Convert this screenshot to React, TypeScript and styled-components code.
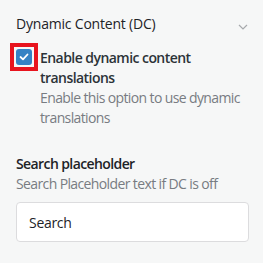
import React from "react";
import styled, { createGlobalStyle } from "styled-components";

const GlobalStyle = createGlobalStyle`
  html, body {
    margin: 0;
    background: #f6f7f7;
  }
  body {
    font-family: "Open Sans", "Noto Sans", sans-serif;
    font-size: 14px;
    color: #1d2327;
  }
`;

const Panel = styled.section`
  padding: 14px 14px 0 16px;
`;

const Header = styled.div`
  display: flex;
  align-items: center;
  justify-content: space-between;
  height: 20px;
  margin-bottom: 14px;
`;

const Title = styled.h3`
  margin: 0;
  font-size: 14px;
  line-height: 20px;
  font-weight: 500;
  letter-spacing: -0.2px;
  color: #1d2327;
`;

const Chevron = styled.svg`
  width: 10px;
  height: 6px;
  margin-right: 1px;
  margin-top: 5px;
  color: #a7aaad;
`;

const CheckboxRow = styled.label`
  display: flex;
  align-items: flex-start;
  gap: 8px;
`;

const Box = styled.span<{ $checked: boolean }>`
  position: relative;
  flex: none;
  width: 16px;
  height: 16px;
  margin-top: 1px;
  border-radius: 3px;
  background: ${({ $checked }) => ($checked ? "#3582c4" : "#fff")};
  display: flex;
  align-items: center;
  justify-content: center;

  &::after {
    content: "";
    position: absolute;
    inset: -6px;
    border: 4px solid #e8141e;
  }
`;

const LabelText = styled.span`
  display: block;
  font-weight: 600;
  line-height: 20px;
  letter-spacing: -0.55px;
  color: #2c3338;
`;

const Help = styled.span`
  display: block;
  line-height: 20px;
  letter-spacing: -0.62px;
  color: #787c82;
`;

const Field = styled.div`
  margin-top: 26px;
`;

const FieldLabel = styled.div`
  font-weight: 600;
  line-height: 20px;
  letter-spacing: -0.6px;
  color: #1d2327;
`;

const Input = styled.input`
  box-sizing: border-box;
  display: block;
  width: 233px;
  height: 40px;
  margin-top: 8px;
  padding: 0 12px;
  border: 1px solid #dcdcde;
  border-radius: 4px;
  background: #fff;
  font-family: inherit;
  font-size: 14px;
  letter-spacing: -0.3px;
  color: #1d2327;
  outline: none;
`;

export default function App() {
  return (
    <Panel>
      <GlobalStyle />
      <Header>
        <Title>Dynamic Content (DC)</Title>
        <Chevron viewBox="0 0 10 6" fill="none">
          <polyline points="1,1 5,5 9,1" stroke="currentColor" strokeWidth="1.2" />
        </Chevron>
      </Header>
      <CheckboxRow>
        <Box $checked>
          <svg width="10" height="8" viewBox="0 0 10 8" fill="none">
            <polyline points="1.5,4 4,6.3 8.5,1.5" stroke="#fff" strokeWidth="1.8" strokeLinecap="round" strokeLinejoin="round" />
          </svg>
        </Box>
        <span>
          <LabelText>Enable dynamic content translations</LabelText>
          <Help>Enable this option to use dynamic translations</Help>
        </span>
      </CheckboxRow>
      <Field>
        <FieldLabel>Search placeholder</FieldLabel>
        <Help>Search Placeholder text if DC is off</Help>
        <Input defaultValue="Search" />
      </Field>
    </Panel>
  );
}
